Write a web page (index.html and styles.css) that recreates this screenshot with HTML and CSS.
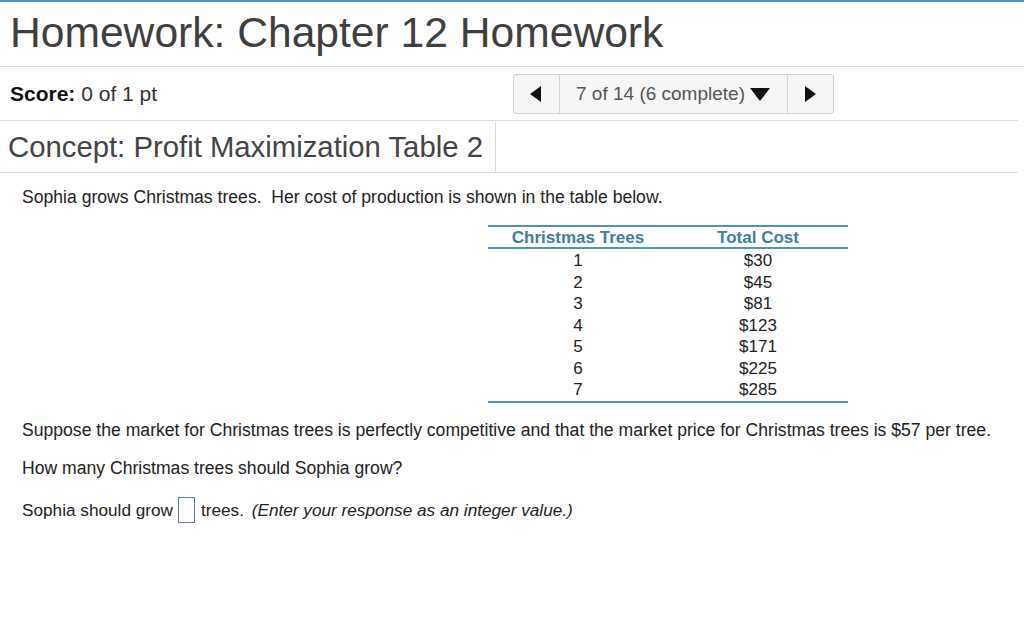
FILE: index.html
```html
<!DOCTYPE html>
<html>
<head>
<meta charset="utf-8">
<link rel="stylesheet" href="styles.css">
</head>
<body>
<div class="page">
  <header class="title-bar">
    <h1 class="title">Homework: Chapter 12 Homework</h1>
  </header>
  <div class="score-row">
    <div class="score"><b>Score:</b> 0 of 1 pt</div>
    <div class="nav">
      <div class="nav-btn nav-prev"><span class="tri-left"></span></div>
      <div class="nav-mid">7 of 14 (6 complete)<span class="tri-down"></span></div>
      <div class="nav-btn nav-next"><span class="tri-right"></span></div>
    </div>
  </div>
  <div class="concept-row">
    <div class="concept">Concept: Profit Maximization Table 2</div>
  </div>
  <main class="content">
    <p class="p1">Sophia grows Christmas trees.&nbsp; Her cost of production is shown in the table below.</p>
    <table class="cost-table">
      <thead>
        <tr><th>Christmas Trees</th><th>Total Cost</th></tr>
      </thead>
      <tbody>
        <tr><td>1</td><td>$30</td></tr>
        <tr><td>2</td><td>$45</td></tr>
        <tr><td>3</td><td>$81</td></tr>
        <tr><td>4</td><td>$123</td></tr>
        <tr><td>5</td><td>$171</td></tr>
        <tr><td>6</td><td>$225</td></tr>
        <tr><td>7</td><td>$285</td></tr>
      </tbody>
    </table>
    <p class="p2">Suppose the market for Christmas trees is perfectly competitive and that the market price for Christmas trees is $57 per tree.</p>
    <p class="p3">How many Christmas trees should Sophia grow?</p>
    <p class="p4"><span>Sophia should grow</span><span class="answer"></span><span>trees. <i>(Enter your response as an integer value.)</i></span></p>
  </main>
</div>
</body>
</html>
```

FILE: styles.css
```css
html, body {
  margin: 0;
  padding: 0;
  background: #ffffff;
}
body {
  font-family: "Liberation Sans", Arial, sans-serif;
  color: #222;
}
.page {
  width: 1024px;
  border-top: 2px solid #4a9ab8;
}
.title-bar {
  height: 65px;
  border-bottom: 1px solid #dcdcdc;
  box-sizing: border-box;
  padding-left: 10px;
}
.title {
  margin: 0;
  font-weight: normal;
  font-size: 42.6px;
  line-height: 61px;
  color: #3f3f3f;
}
.score-row {
  display: flex;
  align-items: center;
  height: 54px;
  border-bottom: 1px solid #dcdcdc;
  box-sizing: border-box;
  margin-right: 6px;
}
.score {
  width: 503px;
  padding-left: 10px;
  box-sizing: border-box;
  font-size: 21px;
  color: #333;
}
.score b {
  color: #111;
}
.nav {
  display: flex;
  height: 40px;
  border: 1px solid #cfcfcf;
  border-radius: 3px;
  background: #f6f6f6;
  box-sizing: border-box;
  margin-left: 10px;
}
.nav-btn {
  width: 45px;
  display: flex;
  align-items: center;
  justify-content: center;
}
.nav-prev {
  border-right: 1px solid #d4d4d4;
}
.nav-next {
  border-left: 1px solid #d4d4d4;
}
.nav-mid {
  width: 227px;
  display: flex;
  align-items: center;
  padding-left: 16px;
  box-sizing: border-box;
  font-size: 19px;
  color: #555;
}
.tri-left {
  width: 0;
  height: 0;
  border-top: 8px solid transparent;
  border-bottom: 8px solid transparent;
  border-right: 11px solid #111;
  margin-right: 2px;
}
.tri-right {
  width: 0;
  height: 0;
  border-top: 8px solid transparent;
  border-bottom: 8px solid transparent;
  border-left: 11px solid #111;
}
.tri-down {
  width: 0;
  height: 0;
  border-left: 10px solid transparent;
  border-right: 10px solid transparent;
  border-top: 13px solid #111;
  margin-left: 5px;
  margin-top: 2px;
}
.concept-row {
  height: 52px;
  border-bottom: 1px solid #dcdcdc;
  box-sizing: border-box;
  margin-right: 6px;
  display: flex;
}
.concept {
  width: 496px;
  box-sizing: border-box;
  padding-left: 8px;
  padding-top: 1px;
  border-right: 1px solid #dcdcdc;
  font-size: 29.3px;
  line-height: 48px;
  color: #444;
  margin-top: 1px;
}
.content {
  padding-left: 22px;
  font-size: 17.6px;
  color: #222;
}
.content p {
  margin: 0;
}
.p1 {
  padding-top: 13px;
  line-height: 22px;
}
.cost-table {
  margin-top: 17px;
  margin-left: 466px;
  width: 360px;
  border-collapse: collapse;
  border-top: 2px solid #4f94b4;
  border-bottom: 2px solid #4f94b4;
  font-size: 17px;
}
.cost-table th {
  width: 50%;
  font-weight: bold;
  color: #3a80a8;
  text-align: center;
  padding: 0;
  height: 20px;
  line-height: 19px;
  border-bottom: 2px solid #4f94b4;
}
.cost-table td {
  text-align: center;
  padding: 0;
  line-height: 21.5px;
  color: #222;
}
.cost-table tbody tr:first-child td {
  padding-top: 1px;
}
.p2 {
  margin-top: 16px !important;
  line-height: 22px;
}
.p3 {
  margin-top: 16px !important;
  line-height: 22px;
}
.p4 {
  margin-top: 16px !important;
  line-height: 30px;
  display: flex;
  align-items: center;
  white-space: pre;
  font-size: 17.2px;
}
.answer {
  display: inline-block;
  width: 15px;
  height: 24px;
  border: 1px solid #5b7fb5;
  margin: 0 6px 0 5px;
}
.p4 i {
  margin-left: 3px;
}
```
